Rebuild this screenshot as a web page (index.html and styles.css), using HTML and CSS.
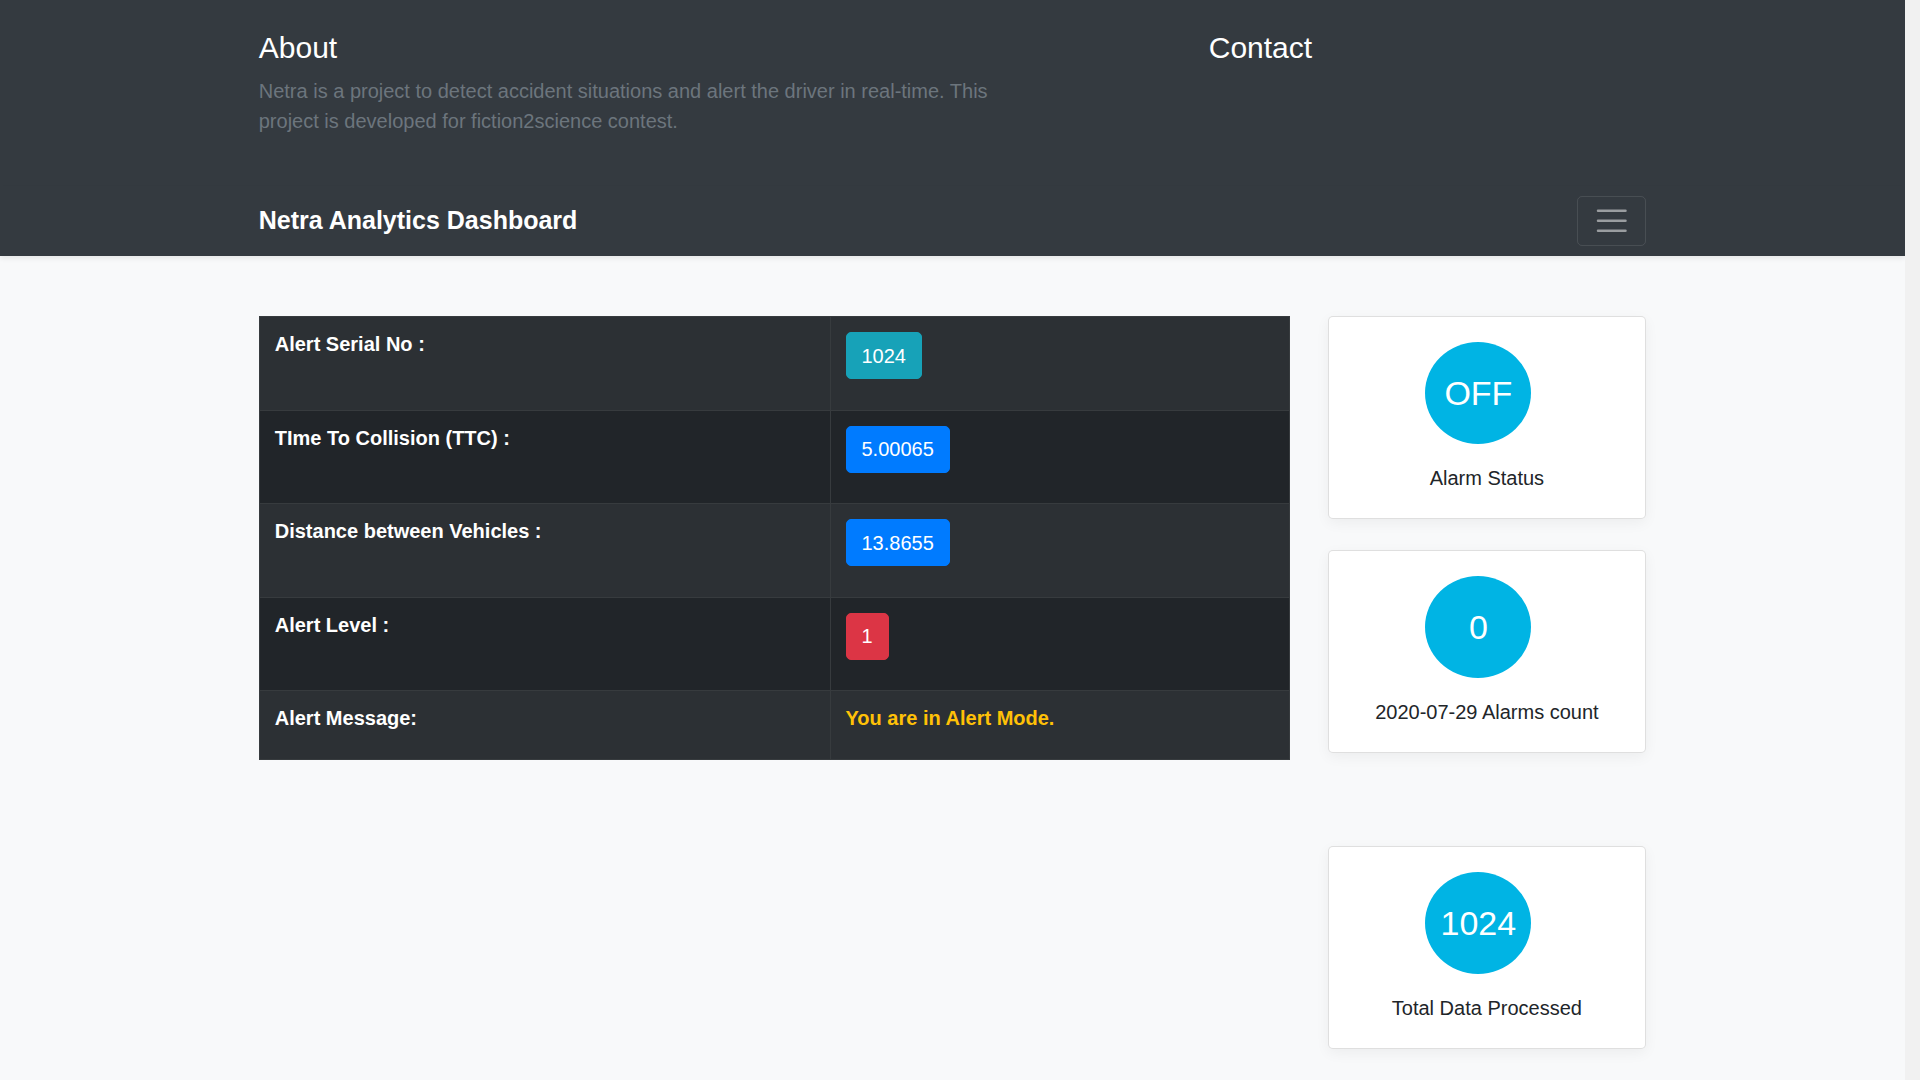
FILE: index.html
```html
<!DOCTYPE html>
<html lang="en">
<head>
<meta charset="utf-8">
<title>Netra Analytics Dashboard</title>
<link rel="stylesheet" href="styles.css">
</head>
<body>
<header>
  <div class="info-panel">
    <div class="container grid">
      <div class="about">
        <h4 class="panel-title">About</h4>
        <p class="panel-text">Netra is a project to detect accident situations and alert the driver in real-time. This project is developed for fiction2science contest.</p>
      </div>
      <div class="contact">
        <h4 class="panel-title">Contact</h4>
      </div>
    </div>
  </div>
  <div class="navbar">
    <div class="container navbar-inner">
      <a class="brand" href="#"><strong>Netra Analytics Dashboard</strong></a>
      <button class="toggler" type="button" aria-label="Toggle navigation">
        <svg class="toggler-icon" viewBox="0 0 30 30" width="37.5" height="37.5" aria-hidden="true"><path d="M4 7h22M4 15h22M4 23h22" stroke="rgba(255,255,255,0.5)" stroke-width="2" stroke-linecap="round" stroke-miterlimit="10" fill="none"/></svg>
      </button>
    </div>
  </div>
</header>
<main class="album">
  <div class="container grid">
    <div class="table-col">
      <table class="alert-table">
        <tr>
          <th>Alert Serial No :</th>
          <td class="value-cell"><span class="btn btn-info">1024</span></td>
        </tr>
        <tr>
          <th>TIme To Collision (TTC) :</th>
          <td class="value-cell"><span class="btn btn-primary">5.00065</span></td>
        </tr>
        <tr>
          <th>Distance between Vehicles :</th>
          <td class="value-cell"><span class="btn btn-primary">13.8655</span></td>
        </tr>
        <tr>
          <th>Alert Level :</th>
          <td class="value-cell"><span class="btn btn-danger">1</span></td>
        </tr>
        <tr>
          <th>Alert Message:</th>
          <td class="message-cell">You are in Alert Mode.</td>
        </tr>
      </table>
    </div>
    <div class="cards-col">
      <div class="stat-card">
        <div class="stat-circle">OFF</div>
        <div class="stat-caption">Alarm Status</div>
      </div>
      <div class="stat-card">
        <div class="stat-circle">0</div>
        <div class="stat-caption">2020-07-29 Alarms count</div>
      </div>
      <div class="stat-card stat-card-spaced">
        <div class="stat-circle">1024</div>
        <div class="stat-caption">Total Data Processed</div>
      </div>
    </div>
  </div>
</main>
</body>
</html>
```
FILE: styles.css
```css
* {
  box-sizing: border-box;
}

html {
  margin: 0;
  padding: 0;
  background: #f1f1f1;
}

body {
  margin: 0 15px 0 0;
  padding: 0;
  font-family: "Liberation Sans", Arial, sans-serif;
  font-size: 20px;
  line-height: 30px;
  color: #212529;
  background: #f8f9fa;
}

.container {
  width: 1425px;
  margin: 0 auto;
  padding: 0 18.75px;
}

.grid {
  display: grid;
  grid-template-columns: repeat(12, 1fr);
  column-gap: 37.5px;
}

/* header info panel */
.info-panel {
  background: #343a40;
}

.about {
  grid-column: 1 / span 7;
  padding: 30px 0;
}

.contact {
  grid-column: 9 / span 4;
  padding: 30px 0;
}

.panel-title {
  margin: 0 0 10px;
  font-size: 30px;
  line-height: 36px;
  font-weight: 400;
  color: #fff;
}

.panel-text {
  margin: 0 0 20px;
  font-size: 20px;
  line-height: 30px;
  color: #6c757d;
}

/* navbar */
.navbar {
  position: relative;
  z-index: 1;
  background: #343a40;
  padding: 10px 0;
  box-shadow: 0 2.5px 5px rgba(0, 0, 0, 0.075);
}

.navbar-inner {
  display: flex;
  justify-content: space-between;
  align-items: center;
}

.brand {
  display: block;
  padding: 6.25px 0;
  font-size: 25px;
  line-height: 37.5px;
  color: #fff;
  text-decoration: none;
}

.brand strong {
  font-weight: 700;
}

.toggler {
  display: flex;
  padding: 5px 15px;
  background: transparent;
  border: 1.25px solid rgba(255, 255, 255, 0.1);
  border-radius: 5px;
  line-height: 1;
  cursor: pointer;
}

.toggler-icon {
  display: block;
}

/* main */
.album {
  padding: 60px 0;
  min-height: 1754px;
  background: #f8f9fa;
}

.table-col {
  grid-column: 1 / span 9;
}

.cards-col {
  grid-column: 10 / span 3;
}

.alert-table {
  width: 100%;
  border-collapse: collapse;
  color: #fff;
  font-size: 20px;
  line-height: 24px;
}

.alert-table th,
.alert-table td {
  padding: 15px 15px 29px;
  border: 1px solid #373b3e;
  vertical-align: top;
  text-align: left;
}

.alert-table th {
  width: 55.4%;
  font-weight: 700;
}

.alert-table tr:nth-child(odd) {
  background: #2c3034;
}

.alert-table tr:nth-child(even) {
  background: #212529;
}

.alert-table td.value-cell {
  padding-bottom: 30.5px;
}

.message-cell {
  font-weight: 700;
  color: #ffc107;
}

.btn {
  display: inline-block;
  vertical-align: top;
  padding: 7.5px 15px;
  font-size: 20px;
  line-height: 30px;
  font-weight: 400;
  color: #fff;
  border: 1.25px solid transparent;
  border-radius: 5px;
}

.btn-info {
  background: #17a2b8;
  border-color: #17a2b8;
}

.btn-primary {
  background: #007bff;
  border-color: #007bff;
}

.btn-danger {
  background: #dc3545;
  border-color: #dc3545;
}

/* stat cards */
.stat-card {
  display: flex;
  flex-direction: column;
  align-items: center;
  padding: 25px;
  margin-bottom: 31px;
  background: #fff;
  border: 1px solid rgba(0, 0, 0, 0.125);
  border-radius: 5px;
  box-shadow: 0 4px 14px rgba(0, 0, 0, 0.05);
}

.stat-card-spaced {
  margin-top: 93px;
}

.stat-circle {
  display: flex;
  align-items: center;
  justify-content: center;
  width: 106px;
  height: 102px;
  margin-right: 17px;
  border-radius: 50%;
  background: #00b4e4;
  color: #fff;
  font-size: 34px;
  line-height: 1;
}

.stat-caption {
  margin-top: 19px;
  font-size: 20px;
  line-height: 30px;
  color: #212529;
}
```
